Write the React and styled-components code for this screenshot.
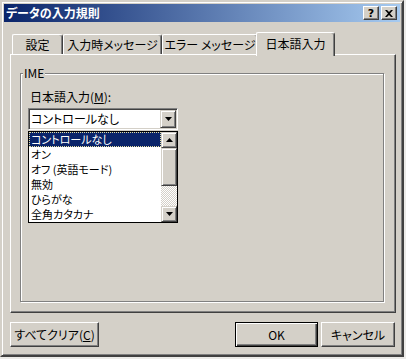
import styled, { createGlobalStyle, css } from 'styled-components'

const FACE = '#d4d0c8'
const SHADOW = '#808080'
const DARK = '#404040'

const GlobalStyle = createGlobalStyle`
  html, body {
    margin: 0;
    padding: 0;
    background: #ecebe8;
  }
  body {
    font-family: "Noto Sans CJK JP", "Noto Sans", sans-serif;
    font-size: 12px;
    font-feature-settings: "palt";
    color: #000;
  }
`

const raised = css`
  border: 1px solid;
  border-color: #fff ${DARK} ${DARK} #fff;
  box-shadow: inset -1px -1px ${SHADOW};
`

const Window = styled.div`
  box-sizing: border-box;
  width: 404px;
  height: 357px;
  padding: 2px;
  background: ${FACE};
  border: 2px solid;
  border-color: ${FACE} ${DARK} ${DARK} ${FACE};
  box-shadow: inset 1px 1px #fff, inset -1px -1px ${SHADOW};
  display: flex;
  flex-direction: column;
`

const TitleBar = styled.div`
  flex: none;
  height: 18px;
  display: flex;
  align-items: center;
  padding: 0 3px 0 2px;
  background: linear-gradient(to right, #0a246a, #a6caf0);
`

const Title = styled.div`
  flex: 1;
  color: #fff;
  font-weight: bold;
  font-size: 12px;
  line-height: 18px;
`

const CaptionButtons = styled.div`
  display: flex;
  gap: 2px;
`

const CaptionButton = styled.div`
  box-sizing: border-box;
  width: 16px;
  height: 14px;
  background: ${FACE};
  ${raised};
  display: grid;
  place-items: center;
  font: bold 11px/1 "DejaVu Sans", sans-serif;
`

const TabStrip = styled.div`
  flex: none;
  display: flex;
  align-items: flex-end;
  height: 22px;
  margin: 10px 0 0 8px;
  position: relative;
  z-index: 1;
`

const Tab = styled.div`
  box-sizing: border-box;
  width: ${p => p.$w}px;
  height: ${p => (p.$active ? 24 : 20)}px;
  margin: ${p => (p.$active ? '0 -2px -2px -2px' : '0')};
  padding-bottom: ${p => (p.$active ? 2 : 0)}px;
  position: relative;
  z-index: ${p => (p.$active ? 2 : 1)};
  background: ${FACE};
  border-top: 1px solid #fff;
  border-left: 1px solid #fff;
  border-right: 1px solid ${DARK};
  box-shadow: inset -1px 0 ${SHADOW};
  border-radius: 2px 3px 0 0;
  display: flex;
  align-items: center;
  justify-content: center;
  white-space: nowrap;
`

const Panel = styled.div`
  box-sizing: border-box;
  flex: none;
  height: 259px;
  margin: 0 4px 0 6px;
  border: 1px solid;
  border-color: #fff ${DARK} ${DARK} #fff;
  box-shadow: inset -1px -1px ${SHADOW};
  padding: 11px 11px 10px 9px;
  display: flex;
  flex-direction: column;
`

const Group = styled.fieldset`
  flex: 1;
  margin: 0;
  min-width: 0;
  border: 1px solid ${SHADOW};
  box-shadow: 1px 1px #fff, inset 1px 1px #fff;
  padding: 10px 8px 0 7px;
`

const Legend = styled.legend`
  margin-left: -5px;
  padding: 0 1px;
  line-height: 14px;
  background: ${FACE};
`

const FieldLabel = styled.div`
  line-height: 14px;
  padding-left: 2px;
  margin-bottom: 4px;
`

const Combo = styled.div`
  box-sizing: border-box;
  width: 150px;
  height: 22px;
  padding: 1px;
  background: #fff;
  border: 1px solid;
  border-color: ${SHADOW} #fff #fff ${SHADOW};
  box-shadow: inset 1px 1px ${DARK}, inset -1px -1px ${FACE};
  display: flex;
`

const ComboText = styled.div`
  flex: 1;
  padding-left: 1px;
  line-height: 18px;
  white-space: nowrap;
`

const ArrowButton = styled.div`
  box-sizing: border-box;
  flex: none;
  width: 16px;
  height: ${p => p.$h || 16}px;
  background: ${FACE};
  border: 1px solid;
  border-color: ${FACE} ${DARK} ${DARK} ${FACE};
  box-shadow: inset 1px 1px #fff, inset -1px -1px ${SHADOW};
  display: grid;
  place-items: center;
`

const DropList = styled.div`
  box-sizing: border-box;
  width: 150px;
  height: 92px;
  margin-top: 1px;
  border: 1px solid #000;
  background: #fff;
  display: flex;
`

const Items = styled.div`
  flex: 1;
  min-width: 0;
`

const Item = styled.div`
  height: 15px;
  line-height: 15px;
  padding-left: 2px;
  font-size: 11px;
  white-space: nowrap;
  overflow: hidden;
  ${p =>
    p.$selected &&
    css`
      background: #0a246a;
      color: #fff;
      outline: 1px dotted #e6dfa0;
      outline-offset: -1px;
    `}
`

const ScrollBar = styled.div`
  flex: none;
  width: 16px;
  display: flex;
  flex-direction: column;
`

const Thumb = styled.div`
  box-sizing: border-box;
  height: 38px;
  background: ${FACE};
  border: 1px solid;
  border-color: ${FACE} ${DARK} ${DARK} ${FACE};
  box-shadow: inset 1px 1px #fff, inset -1px -1px ${SHADOW};
`

const Track = styled.div`
  flex: 1;
  background: repeating-conic-gradient(#fff 0 25%, ${FACE} 0 50%) 0 0 / 2px 2px;
`

const Footer = styled.div`
  flex: none;
  display: flex;
  align-items: center;
  gap: 3px;
  margin-top: 9px;
  padding: 0 5px 0 6px;
`

const Spacer = styled.div`
  flex: 1;
`

const Button = styled.button`
  box-sizing: border-box;
  width: ${p => p.$w}px;
  height: 25px;
  padding: 0;
  font: inherit;
  font-size: 12px;
  color: #000;
  background: ${FACE};
  ${raised};
  white-space: nowrap;
  ${p =>
    p.$default &&
    css`
      border-color: #000;
      box-shadow: inset 1px 1px #fff, inset -1px -1px ${DARK}, inset -2px -2px ${SHADOW};
    `}
`

const Down = () => (
  <svg width="7" height="4" viewBox="0 0 7 4">
    <path d="M0 0h7L3.5 4z" fill="#000" />
  </svg>
)

const Up = () => (
  <svg width="7" height="4" viewBox="0 0 7 4">
    <path d="M0 4h7L3.5 0z" fill="#000" />
  </svg>
)

const CloseGlyph = () => (
  <svg width="8" height="7" viewBox="0 0 8 7">
    <path d="M0 0h2l2 2 2-2h2L5 3.5 8 7H6L4 5 2 7H0l3-3.5z" fill="#000" />
  </svg>
)

const tabs = [
  { label: '設定', w: 51 },
  { label: '入力時メッセージ', w: 99 },
  { label: 'エラー メッセージ', w: 96 },
  { label: '日本語入力', w: 79, active: true },
]

const options = ['コントロールなし', 'オン', 'オフ (英語モード)', '無効', 'ひらがな', '全角カタカナ']

export default function App() {
  return (
    <>
      <GlobalStyle />
      <Window>
        <TitleBar>
          <Title>データの入力規則</Title>
          <CaptionButtons>
            <CaptionButton>?</CaptionButton>
            <CaptionButton>
              <CloseGlyph />
            </CaptionButton>
          </CaptionButtons>
        </TitleBar>

        <TabStrip>
          {tabs.map(t => (
            <Tab key={t.label} $w={t.w} $active={t.active}>
              {t.label}
            </Tab>
          ))}
        </TabStrip>

        <Panel>
          <Group>
            <Legend>IME</Legend>
            <FieldLabel>
              日本語入力(<u>M</u>):
            </FieldLabel>
            <Combo>
              <ComboText>コントロールなし</ComboText>
              <ArrowButton $h={18}>
                <Down />
              </ArrowButton>
            </Combo>
            <DropList>
              <Items>
                {options.map((o, i) => (
                  <Item key={o} $selected={i === 0}>
                    {o}
                  </Item>
                ))}
              </Items>
              <ScrollBar>
                <ArrowButton>
                  <Up />
                </ArrowButton>
                <Thumb />
                <Track />
                <ArrowButton>
                  <Down />
                </ArrowButton>
              </ScrollBar>
            </DropList>
          </Group>
        </Panel>

        <Footer>
          <Button $w={89}>
            すべてクリア(<u>C</u>)
          </Button>
          <Spacer />
          <Button $w={83} $default>
            OK
          </Button>
          <Button $w={74}>キャンセル</Button>
        </Footer>
      </Window>
    </>
  )
}
